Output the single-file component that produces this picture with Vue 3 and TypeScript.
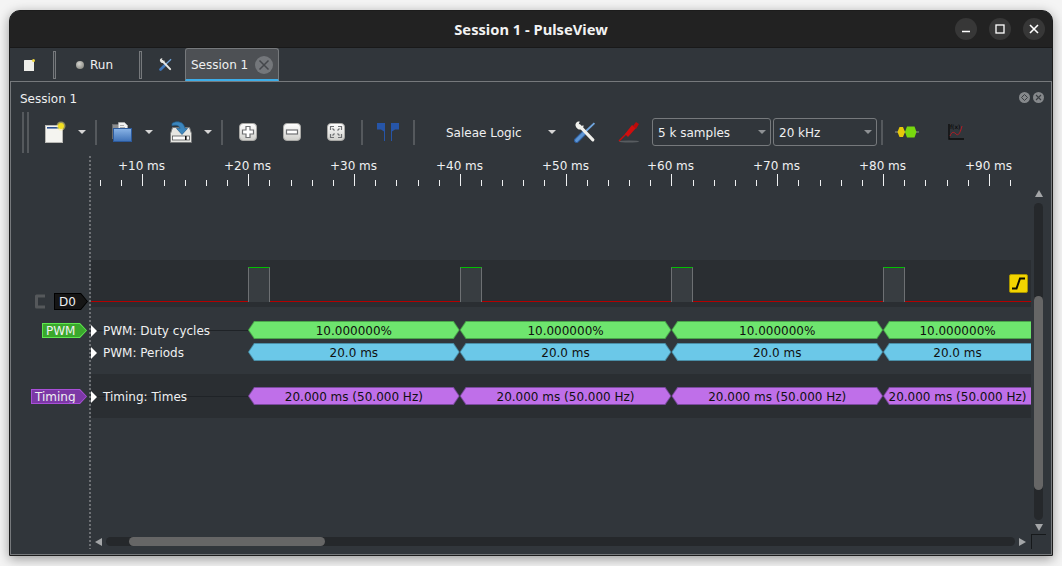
<script setup lang="ts">
const ticks = Array.from({ length: 45 }, (_, i) => {
  const major = (i - 2) % 5 === 0
  return {
    x: Math.round(9.1 + i * 21.16) + 0.5,
    major,
    label: major ? `+${((i - 2) / 5) * 10 + 10} ms` : '',
  }
})

const pulses = [0, 1, 2, 3]

const pwmRows = [
  { title: 'PWM: Duty cycles', text: '10.000000%', color: 'green', line: true },
  { title: 'PWM: Periods', text: '20.0 ms', color: 'blue', line: false },
]
</script>

<template>
  <div class="window">
    <header class="titlebar">
      <span></span>
      <h1>Session 1 - PulseView</h1>
      <div class="win-btns">
        <button class="win-btn">
          <svg width="10" height="10" viewBox="0 0 10 10"><path d="M1 7.500h8" stroke="#fff" stroke-width="1.500" /></svg>
        </button>
        <button class="win-btn">
          <svg width="10" height="10" viewBox="0 0 10 10"><rect x="1" y="1" width="8" height="8" fill="none" stroke="#fff" stroke-width="1.300" /></svg>
        </button>
        <button class="win-btn">
          <svg width="10" height="10" viewBox="0 0 10 10"><path d="M1 1l8 8M9 1l-8 8" stroke="#fff" stroke-width="1.600" /></svg>
        </button>
      </div>
    </header>

    <nav class="tabbar">
      <div class="tab-tool tab-doc">
        <svg width="11" height="12" viewBox="0 0 11 12">
          <rect x="0" y="1" width="10" height="11" rx="0.500" fill="#eeeeea" />
          <circle cx="9.500" cy="1.600" r="1.500" fill="#f0d840" />
        </svg>
      </div>
      <i class="tab-sep"></i>
      <div class="run">
        <i class="run-dot"></i>
        <span>Run</span>
      </div>
      <i class="tab-sep"></i>
      <div class="tab-tool tab-tools">
        <svg width="13" height="13" viewBox="0 0 21 21">
          <path d="M19.500 2L10 11" stroke="#6fa4dc" stroke-width="2" />
          <path d="M9 12L2.500 18.500" stroke="#3f76b8" stroke-width="4.500" stroke-linecap="round" />
          <path d="M5 4.500L18 18" stroke="#e8e8e4" stroke-width="3.200" stroke-linecap="round" />
          <path d="M1.500 4.500C1 2 3 0 5.500 0.500L4.500 3l2 2L9 4C9.500 7 7 8.500 4.500 8 3 7.500 2 6 1.500 4.500z" fill="#e8e8e4" />
        </svg>
      </div>
      <div class="tab">
        <span>Session 1</span>
        <svg width="18" height="18" viewBox="0 0 18 18">
          <circle cx="9" cy="9" r="9" fill="#74777b" />
          <path d="M4.500 4.500l9 9M13.500 4.500l-9 9" stroke="#44474b" stroke-width="1.500" />
        </svg>
      </div>
    </nav>

    <section class="dock">
      <div class="dock-title">
        <span class="dock-name">Session 1</span>
        <div class="dock-btns">
          <svg width="11" height="11" viewBox="0 0 11 11">
            <circle cx="5.500" cy="5.500" r="5.500" fill="#85888b" />
            <path d="M5.500 2.500l3 3-3 3-3-3z" fill="none" stroke="#3a3e42" stroke-width="1" />
          </svg>
          <svg width="11" height="11" viewBox="0 0 11 11">
            <circle cx="5.500" cy="5.500" r="5.500" fill="#85888b" />
            <path d="M3 3l5 5M8 3l-5 5" stroke="#3a3e42" stroke-width="1.100" />
          </svg>
        </div>
      </div>

      <div class="toolbar">
        <i class="handle"></i>

        <div class="group">
          <button class="tool">
            <svg width="22" height="22" viewBox="0 0 22 22">
              <rect x="1.500" y="4.500" width="17" height="17" fill="#f4f4f0" stroke="#b8b8b4" />
              <rect x="3" y="6" width="12" height="1.600" fill="#2a4f8f" />
              <circle cx="17" cy="5" r="4.500" fill="#fff07a" opacity="0.500" />
              <circle cx="17" cy="5" r="3" fill="#f3e021" />
            </svg>
          </button>
          <button class="drop"><i class="caret"></i></button>
        </div>
        <i class="sep"></i>

        <div class="group">
          <button class="tool">
            <svg width="20" height="20" viewBox="0 0 20 20">
              <rect x="0.500" y="2.500" width="9" height="14" fill="#8b8d8f" stroke="#6a6c6e" />
              <path d="M6.500 0.500h6l3 3v6h-9z" fill="#f2f2f2" stroke="#b8b8b8" stroke-width="0.600" />
              <path d="M8 3.500h4M8 5.500h5" stroke="#9a9a9a" stroke-width="0.800" />
              <defs>
                <linearGradient id="folder" x1="0" y1="0" x2="0" y2="1">
                  <stop offset="0" stop-color="#8ab4e6" />
                  <stop offset="1" stop-color="#3f72b8" />
                </linearGradient>
              </defs>
              <rect x="1.500" y="6.500" width="18" height="13" fill="url(#folder)" stroke="#2c5a9c" />
            </svg>
          </button>
          <button class="drop"><i class="caret"></i></button>
        </div>

        <div class="group">
          <button class="tool">
            <svg width="22" height="22" viewBox="0 0 22 22">
              <path d="M2.500 6.500h17l2 6v9h-21v-9z" fill="#e6e6e2" stroke="#77797a" />
              <rect x="2.500" y="15" width="17" height="4" fill="#fbfbfb" stroke="#55585a" stroke-width="0.800" />
              <rect x="15" y="15" width="1.600" height="4" fill="#111" />
              <path d="M2 2.500C6 -0.500 14 0 15 7.500h2.500l-5.500 6-5.500-6H10C9.500 4.500 6 3.500 2 4.800z" fill="#3c86bd" stroke="#1f5b8c" stroke-width="0.700" />
            </svg>
          </button>
          <button class="drop"><i class="caret"></i></button>
        </div>
        <i class="sep"></i>

        <button class="tool">
          <svg width="18" height="18" viewBox="0 0 18 18">
            <defs>
              <linearGradient id="key" x1="0" y1="0" x2="0" y2="1">
                <stop offset="0" stop-color="#ffffff" />
                <stop offset="1" stop-color="#cfcfcb" />
              </linearGradient>
            </defs>
            <rect x="0.500" y="0.500" width="17" height="17" rx="3.500" fill="url(#key)" stroke="#a9a9a6" />
            <path d="M7 3.500h4V7h3.500v4H11v3.500H7V11H3.500V7H7z" fill="#fff" stroke="#6f7173" stroke-width="1.200" />
          </svg>
        </button>
        <button class="tool">
          <svg width="18" height="18" viewBox="0 0 18 18">
            <rect x="0.500" y="0.500" width="17" height="17" rx="3.500" fill="url(#key)" stroke="#a9a9a6" />
            <rect x="3.500" y="7" width="11" height="4" fill="#fff" stroke="#6f7173" stroke-width="1.200" />
          </svg>
        </button>
        <button class="tool">
          <svg width="18" height="18" viewBox="0 0 18 18">
            <rect x="0.500" y="0.500" width="17" height="17" rx="3.500" fill="url(#key)" stroke="#a9a9a6" />
            <path d="M3.500 7V3.500H7M11 3.500h3.500V7M3.500 11v3.500H7M11 14.500h3.500V11M5.500 5.500l2 2M12.500 5.500l-2 2M5.500 12.500l2-2M12.500 12.500l-2-2" fill="none" stroke="#6f7173" stroke-width="1.200" />
          </svg>
        </button>
        <i class="sep"></i>

        <button class="tool">
          <svg width="22" height="18" viewBox="0 0 22 18">
            <path d="M0 0h8v18H7V8.500L4 6.500H0z" fill="#2655a8" />
            <path d="M14 0h8v6.500h-4L15 8.500V18h-1z" fill="#2655a8" />
          </svg>
        </button>
        <i class="sep"></i>

        <button class="device">
          <span class="low">Saleae Logic</span>
          <i class="caret"></i>
        </button>

        <button class="tool">
          <svg width="22" height="22" viewBox="0 0 21 21">
            <path d="M19.500 2L10 11" stroke="#6fa4dc" stroke-width="1.800" />
            <path d="M9 12L2.500 18.500" stroke="#2f5f9e" stroke-width="5" stroke-linecap="round" />
            <path d="M9 12L2.500 18.500" stroke="#5d95d4" stroke-width="3" stroke-linecap="round" />
            <path d="M5 4.500L18 18" stroke="#f0f0ec" stroke-width="3" stroke-linecap="round" />
            <path d="M1.500 4.500C1 2 3 0 5.500 0.500L4.500 3l2 2L9 4C9.500 7 7 8.500 4.500 8 3 7.500 2 6 1.500 4.500z" fill="#f0f0ec" />
          </svg>
        </button>
        <button class="tool">
          <svg width="22" height="22" viewBox="0 0 22 22">
            <ellipse cx="11" cy="20.500" rx="10" ry="1" fill="#585c60" />
            <path d="M1 20l8-8" stroke="#c80c0c" stroke-width="1.500" />
            <path d="M7 13l7-9 4 3-8 9z" fill="#d00e0e" />
            <path d="M15 5l3-4 3 2-3 5z" fill="#b80c0c" />
          </svg>
        </button>

        <div class="combos">
          <div class="combo combo-samples">
            <span class="low">5 k samples</span>
            <i class="combo-caret"></i>
          </div>
          <div class="combo combo-rate">
            <span class="low">20 kHz</span>
            <i class="combo-caret"></i>
          </div>
        </div>
        <i class="sep"></i>

        <button class="tool tool-decode">
          <svg width="24" height="14" viewBox="0 0 24 14">
            <path d="M0 7h24" stroke="#a8aaa8" stroke-width="0.800" />
            <path d="M2.500 7L4.500 2h3.500L10 7l-2 5H4.500z" fill="#e6c80a" />
            <path d="M10 7l2-5.500h7.500L21.500 7l-2 5.500H12z" fill="#78d80e" />
          </svg>
        </button>
        <button class="tool tool-math">
          <svg width="18" height="18" viewBox="0 0 18 18">
            <text x="3" y="6" class="fx">f(x)</text>
            <path d="M2 1v15h15" fill="none" stroke="#0c0c0c" stroke-width="1.300" />
            <path d="M3 13C5 8 7 9 9 11s4 0 6-8" fill="none" stroke="#b81c24" stroke-width="1" />
          </svg>
        </button>
      </div>

      <div class="view">
        <div class="view-body">
          <div class="rows">
            <div class="row ruler-row">
              <div class="gutter"></div>
              <svg class="ruler" width="940" height="32" viewBox="0 0 940 32">
                <template v-for="t in ticks" :key="t.x">
                  <line :x1="t.x" :x2="t.x" :y1="t.major ? 19 : 25" y2="31" stroke="#eff0f1" />
                  <text v-if="t.major" :x="t.x - 1" y="15" text-anchor="middle" class="tick-label">{{ t.label }}</text>
                </template>
              </svg>
            </div>

            <div class="row blank-row">
              <div class="gutter"></div>
              <div class="track"></div>
            </div>

            <div class="row logic-row">
              <div class="gutter">
                <svg class="enable" width="12" height="15" viewBox="0 0 12 15">
                  <path d="M11 2H2.500v11H11" fill="none" stroke="#55585b" stroke-width="3" stroke-linejoin="round" />
                </svg>
                <div class="tag tag-d0"><span class="tag-fill">D0</span></div>
              </div>
              <div class="track band">
                <div class="signal">
                  <i v-for="p in pulses" :key="p" class="pulse"></i>
                </div>
                <div class="trigger">
                  <svg width="15" height="15" viewBox="0 0 15 15">
                    <path d="M1 12.500h4.500L9 2.500h5" fill="none" stroke="#0c0c00" stroke-width="2" />
                  </svg>
                </div>
              </div>
            </div>

            <div class="row pwm-row">
              <div class="gutter">
                <div class="tag tag-pwm"><span class="tag-fill">PWM</span></div>
              </div>
              <div class="track ann-track">
                <div v-for="r in pwmRows" :key="r.title" class="ann-row" :class="r.color">
                  <div class="ann-title" :class="{ lined: r.line }">
                    <i class="expand"></i>
                    <span>{{ r.title }}</span>
                  </div>
                  <div v-for="p in pulses" :key="p" class="seg" :class="{ last: p === 3 }">
                    <span class="seg-fill">{{ r.text }}</span>
                  </div>
                </div>
              </div>
            </div>

            <div class="row timing-row">
              <div class="gutter">
                <div class="tag tag-timing"><span class="tag-fill">Timing</span></div>
              </div>
              <div class="track band ann-track">
                <div class="ann-row purple">
                  <div class="ann-title lined">
                    <i class="expand"></i>
                    <span>Timing: Times</span>
                  </div>
                  <div v-for="p in pulses" :key="p" class="seg" :class="{ last: p === 3 }">
                    <span class="seg-fill">20.000 ms (50.000 Hz)</span>
                  </div>
                </div>
              </div>
            </div>

            <div class="row fill-row">
              <div class="gutter"></div>
              <div class="track"></div>
            </div>
          </div>

          <div class="vscroll">
            <i class="arrow up"></i>
            <div class="vtrack"><div class="vthumb"></div></div>
            <i class="arrow down"></i>
          </div>
        </div>

        <div class="hscroll">
          <i class="arrow left"></i>
          <div class="htrack"><div class="hthumb"></div></div>
          <i class="arrow right"></i>
          <i class="corner"></i>
        </div>

        <i class="cursor-line"></i>
      </div>
    </section>
  </div>
</template>

<style>
html,
body {
  margin: 0;
  height: 566px;
  overflow: hidden;
  background: #f4f4f4;
}
</style>

<style scoped>
.window {
  box-sizing: border-box;
  width: 1044px;
  height: 546px;
  margin: 10px 0 0 9px;
  display: flex;
  flex-direction: column;
  border: 1px solid #1c1c1c;
  border-radius: 11px 11px 1px 1px;
  overflow: hidden;
  background: #31363b;
  box-shadow: 0 3px 12px rgba(0, 0, 0, 0.38);
  font-family: "DejaVu Sans", sans-serif;
  font-size: 12px;
  color: #eff0f1;
}

button {
  padding: 0;
  border: 0;
  background: none;
  font: inherit;
  color: inherit;
}

/* title bar */
.titlebar {
  flex: none;
  height: 37px;
  display: grid;
  grid-template-columns: 1fr auto 1fr;
  align-items: center;
  background: #222222;
  border-bottom: 1px solid #191919;
  box-sizing: border-box;
}

.titlebar h1 {
  margin: 0;
  font-family: "Noto Sans", sans-serif;
  font-size: 14.700px;
  font-weight: 700;
  color: #f2f2f2;
}

.win-btns {
  display: flex;
  justify-content: flex-end;
  gap: 12px;
  padding-right: 7px;
}

.win-btn {
  width: 22px;
  height: 22px;
  border-radius: 50%;
  background: #373737;
  display: flex;
  align-items: center;
  justify-content: center;
}

/* tabs */
.tabbar {
  flex: none;
  height: 33px;
  display: flex;
  align-items: center;
  background: #31363b;
}

.tab-tool {
  width: 43px;
  height: 100%;
  display: flex;
  align-items: center;
  justify-content: center;
  box-sizing: border-box;
}

.tab-doc {
  padding-right: 4px;
}

.tab-tools {
  padding-left: 3px;
}

.tab-sep {
  width: 3px;
  height: 28px;
  box-sizing: border-box;
  border: 1px solid #76797c;
  background: #3a3f44;
}

.run {
  width: 83px;
  display: flex;
  align-items: center;
  gap: 6px;
  padding-left: 20px;
  box-sizing: border-box;
}

.run-dot {
  width: 8px;
  height: 8px;
  border-radius: 50%;
  background: radial-gradient(circle at 40% 35%, #d4d4cf, #77776f);
}

.tab {
  width: 94px;
  height: 33px;
  box-sizing: border-box;
  display: flex;
  align-items: center;
  justify-content: space-between;
  padding: 2px 5px 0 5px;
  background: #4d5054;
  border: 1px solid #76797c;
  border-bottom: 2px solid #3daee9;
  border-radius: 3px 3px 0 0;
}

/* dock */
.dock {
  flex: 1;
  min-height: 0;
  display: flex;
  flex-direction: column;
  border: 1px solid #76797c;
  padding-bottom: 5px;
}

.dock-title {
  flex: none;
  height: 28px;
  padding: 3px 7px 0 9px;
  box-sizing: border-box;
  display: flex;
  align-items: center;
  justify-content: space-between;
}

.dock-name {
  margin-top: 2px;
}

.low {
  padding-top: 2px;
}

.dock-btns {
  display: flex;
  gap: 3px;
}

.dock-btns svg {
  display: block;
}

.toolbar {
  flex: none;
  height: 45px;
  display: flex;
  align-items: center;
  gap: 6px;
  padding-left: 11px;
  padding-bottom: 1px;
  box-sizing: border-box;
}

.handle {
  width: 6.500px;
  height: 41px;
  margin-right: 1.500px;
  box-sizing: border-box;
  border-left: 2px solid #55595d;
  border-right: 2px solid #55595d;
}

.group {
  display: flex;
  align-items: center;
}

.tool {
  width: 38px;
  height: 32px;
  display: flex;
  align-items: center;
  justify-content: center;
}

.drop {
  width: 15px;
  height: 32px;
  display: flex;
  align-items: center;
  justify-content: center;
}

.caret {
  width: 0;
  height: 0;
  border-left: 4px solid transparent;
  border-right: 4px solid transparent;
  border-top: 4px solid #d6d6d6;
}

.sep {
  width: 2px;
  height: 25px;
  background: #55595d;
}

.device {
  width: 139px;
  height: 32px;
  display: flex;
  align-items: center;
  justify-content: space-between;
  padding: 0 4px 0 25px;
  box-sizing: border-box;
}

.combos {
  display: flex;
  gap: 2px;
  margin: 0 -2px;
}

.combo {
  height: 28px;
  box-sizing: border-box;
  border: 1px solid #76797c;
  border-radius: 3px;
  display: flex;
  align-items: center;
  justify-content: space-between;
  padding: 0 4px 0 5px;
}

.combo-samples {
  width: 119px;
}

.combo-rate {
  width: 104px;
}

.combo-caret {
  width: 0;
  height: 0;
  border-left: 4px solid transparent;
  border-right: 4px solid transparent;
  border-top: 4px solid #8e9194;
}

.tool-decode {
  margin-left: -1px;
}

.tool-math {
  margin-left: 5px;
}

.fx {
  font-family: "DejaVu Sans", sans-serif;
  font-size: 6px;
  fill: #000;
}

/* trace view */
.view {
  flex: 1;
  min-height: 0;
  position: relative;
  display: flex;
  flex-direction: column;
}

.view-body {
  flex: 1;
  min-height: 0;
  display: flex;
}

.rows {
  width: 1020px;
  display: flex;
  flex-direction: column;
}

.row {
  flex: none;
  display: flex;
}

.gutter {
  flex: none;
  width: 80px;
  display: flex;
  justify-content: flex-end;
  align-items: flex-start;
  padding-right: 4px;
  box-sizing: border-box;
}

.track {
  flex: 1;
  min-width: 0;
}

.band {
  background: #2a2e32;
}

.ruler-row {
  height: 32px;
}

.ruler {
  display: block;
}

.tick-label {
  font-family: "DejaVu Sans", sans-serif;
  font-size: 12px;
  fill: #eff0f1;
}

.blank-row {
  height: 73px;
}

.logic-row {
  height: 47px;
}

.logic-row .gutter {
  padding-top: 33px;
  padding-right: 3px;
}

.enable {
  margin: 1px 8px 0 0;
  flex: none;
}

.logic-row .track {
  position: relative;
  padding-top: 7px;
}

.signal {
  height: 35px;
  box-sizing: border-box;
  display: flex;
  gap: 189.700px;
  padding-left: 157px;
  border-bottom: 1px solid #b40000;
}

.pulse {
  width: 22px;
  height: 35px;
  box-sizing: border-box;
  background: #383d41;
  border: 1px solid #6d7073;
  border-top: 1px solid #00c000;
  border-bottom: 0;
}

.trigger {
  position: absolute;
  right: 3px;
  top: 14px;
  width: 19px;
  height: 19px;
  box-sizing: border-box;
  background: #f2d400;
  border: 1px solid #a89400;
  border-radius: 2px;
  display: flex;
  align-items: center;
  justify-content: center;
}

.tag {
  display: flex;
  box-sizing: border-box;
  clip-path: polygon(0 0, calc(100% - 7px) 0, 100% 50%, calc(100% - 7px) 100%, 0 100%);
}

.tag-fill {
  flex: 1;
  margin: 1px;
  padding: 1px 0 0 3px;
  line-height: 13px;
  clip-path: polygon(0 0, calc(100% - 6.500px) 0, 100% 50%, calc(100% - 6.500px) 100%, 0 100%);
}

.tag-d0 {
  width: 34px;
  height: 17px;
  background: #000;
}

.tag-d0 .tag-fill {
  background: #151515;
  padding-left: 4px;
  line-height: 14px;
}

.tag-pwm {
  width: 45px;
  height: 15px;
  margin-top: 16px;
  background: #5fe84f;
}

.tag-pwm .tag-fill {
  background: #3aa82c;
}

.tag-timing {
  width: 56px;
  height: 15px;
  margin-top: 15px;
  background: #a94fd8;
}

.tag-timing .tag-fill {
  background: #7c38a6;
}

.pwm-row {
  height: 67px;
}

.timing-row {
  height: 44px;
}

.fill-row {
  flex: 1;
}

.ann-track {
  padding-top: 14px;
  display: flex;
  flex-direction: column;
  gap: 4px;
}

.timing-row .ann-track {
  padding-top: 13px;
}

.ann-row {
  height: 18px;
  display: flex;
  overflow: hidden;
}

.ann-title {
  flex: none;
  width: 157px;
  display: flex;
  align-items: center;
  gap: 6px;
  white-space: nowrap;
  padding-top: 1px;
  box-sizing: border-box;
}

.ann-title span {
  padding-top: 1px;
}

.ann-title.lined {
  background: linear-gradient(#1f2327, #1f2327) center / 100% 1px no-repeat;
}

.expand {
  flex: none;
  width: 0;
  height: 0;
  border-left: 6px solid #fff;
  border-top: 6.500px solid transparent;
  border-bottom: 6.500px solid transparent;
}

.seg {
  flex: none;
  width: 211.700px;
  height: 18px;
  display: flex;
  clip-path: polygon(0 50%, 6px 0, calc(100% - 6px) 0, 100% 50%, calc(100% - 6px) 100%, 6px 100%);
}

.seg.last {
  flex: 1;
  width: auto;
  clip-path: polygon(0 50%, 6px 0, 100% 0, 100% 100%, 6px 100%);
}

.seg-fill {
  flex: 1;
  margin: 1px;
  padding-top: 2px;
  box-sizing: border-box;
  display: flex;
  align-items: center;
  justify-content: center;
  white-space: nowrap;
  color: #101010;
  clip-path: polygon(0 50%, 5.500px 0, calc(100% - 5.500px) 0, 100% 50%, calc(100% - 5.500px) 100%, 5.500px 100%);
}

.seg.last .seg-fill {
  margin-right: 0;
  clip-path: polygon(0 50%, 5.500px 0, 100% 0, 100% 100%, 5.500px 100%);
}

.green .seg {
  background: #4aa64a;
}

.green .seg-fill {
  background: #6ee56e;
}

.blue .seg {
  background: #4a8fa8;
}

.blue .seg-fill {
  background: #6bc8e8;
}

.purple .seg {
  background: #7a4a9e;
}

.purple .seg-fill {
  background: #bf6fe9;
}

/* scrollbars */
.vscroll {
  flex: none;
  width: 15px;
  padding: 35px 3px 3px 3px;
  box-sizing: border-box;
  display: flex;
  flex-direction: column;
  align-items: center;
}

.arrow {
  flex: none;
  width: 0;
  height: 0;
}

.arrow.up {
  border-left: 4px solid transparent;
  border-right: 4px solid transparent;
  border-bottom: 7px solid #a4a6a8;
  margin: 0 0 6px;
}

.arrow.down {
  border-left: 4px solid transparent;
  border-right: 4px solid transparent;
  border-top: 7px solid #a4a6a8;
  margin-top: 4px;
}

.arrow.left {
  border-top: 4px solid transparent;
  border-bottom: 4px solid transparent;
  border-right: 7px solid #a4a6a8;
}

.arrow.right {
  border-top: 4px solid transparent;
  border-bottom: 4px solid transparent;
  border-left: 7px solid #a4a6a8;
}

.vtrack {
  flex: 1;
  width: 9px;
  background: #25282b;
  border-radius: 5px;
}

.vthumb {
  margin-top: 93px;
  height: 194px;
  background: #666666;
  border-radius: 5px;
}

.hscroll {
  flex: none;
  height: 15px;
  display: flex;
  align-items: center;
  gap: 4px;
  padding: 0 5px 0 84px;
  box-sizing: border-box;
}

.htrack {
  flex: 1;
  height: 9px;
  background: #25282b;
  border-radius: 5px;
}

.hthumb {
  width: 196px;
  height: 9px;
  margin-left: 23px;
  background: #666666;
  border-radius: 5px;
}

.corner {
  flex: none;
  width: 15px;
  height: 15px;
  margin-left: 1px;
  box-sizing: border-box;
  border-top: 1px solid #16191b;
  border-left: 1px solid #16191b;
}

.cursor-line {
  position: absolute;
  left: 78px;
  top: 1px;
  bottom: 0;
  width: 2px;
  background: repeating-linear-gradient(#6d7074 0 2px, transparent 2px 4px);
}
</style>
